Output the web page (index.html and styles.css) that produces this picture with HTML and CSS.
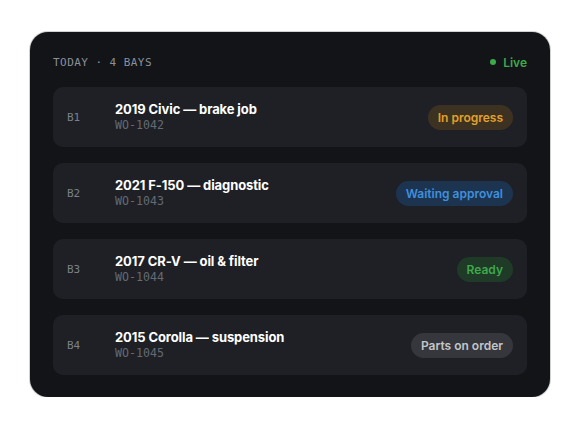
FILE: index.html
```html
<!DOCTYPE html>
<html>
<head>
<meta charset="utf-8">
<link rel="stylesheet" href="styles.css">
</head>
<body>
<div class="card">
  <div class="head">
    <span class="head-title">TODAY · 4 BAYS</span>
    <span class="live"><span class="dot"></span>Live</span>
  </div>
  <div class="rows">
    <div class="row">
      <span class="bay">B1</span>
      <div class="info">
        <div class="title">2019 Civic — brake job</div>
        <div class="wo">WO-1042</div>
      </div>
      <span class="badge b-progress">In progress</span>
    </div>
    <div class="row">
      <span class="bay">B2</span>
      <div class="info">
        <div class="title">2021 F-150 — diagnostic</div>
        <div class="wo">WO-1043</div>
      </div>
      <span class="badge b-waiting">Waiting approval</span>
    </div>
    <div class="row">
      <span class="bay">B3</span>
      <div class="info">
        <div class="title">2017 CR-V — oil &amp; filter</div>
        <div class="wo">WO-1044</div>
      </div>
      <span class="badge b-ready">Ready</span>
    </div>
    <div class="row">
      <span class="bay">B4</span>
      <div class="info">
        <div class="title">2015 Corolla — suspension</div>
        <div class="wo">WO-1045</div>
      </div>
      <span class="badge b-parts">Parts on order</span>
    </div>
  </div>
</div>
</body>
</html>
```
FILE: styles.css
```css
* { box-sizing: border-box; }
html, body { margin: 0; padding: 0; background: #ffffff; }
body { padding: 32px 0 0 30px; font-family: Inter, "Noto Sans", sans-serif; }
.card {
  width: 520px;
  height: 365px;
  background: #121418;
  border-radius: 18px;
  box-shadow: 0 0 0 1px rgba(0,0,0,0.18);
  padding: 22px 23px 22px 23px;
}
.head {
  display: flex;
  justify-content: space-between;
  align-items: center;
  height: 16px;
  margin-bottom: 17px;
}
.head-title {
  font-family: "DejaVu Sans Mono", "Liberation Mono", monospace;
  font-size: 11px;
  letter-spacing: 0.45px;
  color: #8b9099;
}
.live {
  display: flex;
  align-items: center;
  gap: 7px;
  font-size: 12px;
  font-weight: 600;
  color: #3ea94b;
}
.dot { width: 6px; height: 6px; border-radius: 50%; background: #3ea94b; }
.rows { display: flex; flex-direction: column; gap: 16px; }
.row {
  height: 60px;
  background: #1e2025;
  border-radius: 10px;
  display: flex;
  align-items: center;
  padding: 0 14px;
}
.bay {
  width: 48px;
  font-family: "DejaVu Sans Mono", "Liberation Mono", monospace;
  font-size: 11px;
  color: #7b8089;
}
.info { flex: 1; }
.title {
  font-size: 13px;
  line-height: 16px;
  font-weight: 700;
  color: #ffffff;
  letter-spacing: -0.1px;
}
.wo {
  font-family: "DejaVu Sans Mono", "Liberation Mono", monospace;
  font-size: 11.6px;
  line-height: 15px;
  color: #646a73;
  margin-top: 1px;
}
.badge {
  height: 25px;
  line-height: 25px;
  padding: 0 10px;
  border-radius: 13px;
  font-size: 12px;
  font-weight: 600;
  letter-spacing: 0;
}
.b-progress { background: #3d3221; color: #e2a02c; }
.b-waiting { background: #1d3450; color: #3f8fdc; }
.b-ready { background: #1f3a27; color: #3ea94b; }
.b-parts { background: #35373c; color: #c3c5c9; }
```
